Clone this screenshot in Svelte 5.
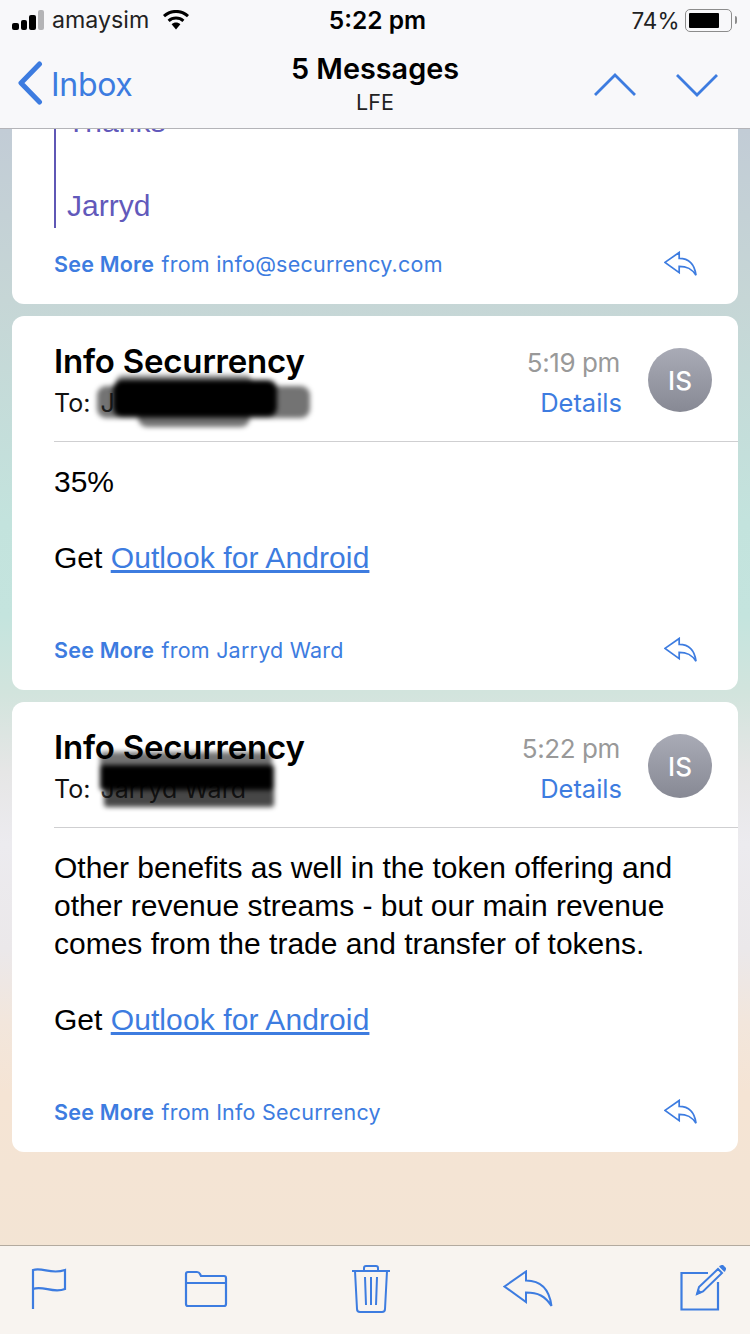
<script>
	const messages = [
		{
			id: 2,
			time: '5:19 pm',
			from: 'Jarryd Ward',
			paragraphs: ['35%']
		},
		{
			id: 3,
			time: '5:22 pm',
			from: 'Info Securrency',
			paragraphs: [
				'Other benefits as well in the token offering and other revenue streams - but our main revenue comes from the trade and transfer of tokens.'
			]
		}
	];
</script>

{#snippet replyIcon(cls)}
	<svg class={cls} viewBox="0 0 50 38" aria-hidden="true">
		<path
			d="M1.5 16.5 L23 1.5 V10.5 C36 10.5 46 17 48.5 36 C42 26 35 22.5 23 22.5 V32 Z"
			fill="none"
			stroke="#3d7ce0"
			stroke-width="2.6"
			stroke-linejoin="miter"
		/>
	</svg>
{/snippet}

<div class="page">
	<header class="nav">
		<div class="status">
			<div class="carrier">
				<span class="bars"><i></i><i></i><i></i><i class="off"></i></span>
				<span>amaysim</span>
				<svg class="wifi" viewBox="0 0 28 20" aria-hidden="true">
					<path d="M14 19.5 L9.6 14.2 C12 12 16 12 18.4 14.2 Z" fill="#000" />
					<path d="M6.6 10.8 C10.8 7 17.2 7 21.4 10.8" fill="none" stroke="#000" stroke-width="3" />
					<path d="M2 6.2 C9 -0.2 19 -0.2 26 6.2" fill="none" stroke="#000" stroke-width="3" />
				</svg>
			</div>
			<div class="clock">5:22 pm</div>
			<div class="power">
				<span>74%</span>
				<span class="battery"><b></b></span>
				<span class="nub"></span>
			</div>
		</div>
		<div class="bar">
			<div class="back">
				<svg viewBox="0 0 26 44" aria-hidden="true">
					<path d="M22.5 3 L4 22 L22.5 41" fill="none" stroke="#3d7ce0" stroke-width="5" stroke-linecap="round" stroke-linejoin="round" />
				</svg>
				<span>Inbox</span>
			</div>
			<div class="title">
				<strong>5 Messages</strong>
				<span>LFE</span>
			</div>
			<div class="arrows">
				<svg viewBox="0 0 42 24" aria-hidden="true"><path d="M1 22 L21 2 L41 22" fill="none" stroke="#3d7ce0" stroke-width="2.8" /></svg>
				<svg viewBox="0 0 42 24" aria-hidden="true"><path d="M1 2 L21 22 L41 2" fill="none" stroke="#3d7ce0" stroke-width="2.8" /></svg>
			</div>
		</div>
	</header>

	<main class="thread">
		<article class="card first">
			<blockquote>
				<p class="clipped">Thanks</p>
				<p>Jarryd</p>
			</blockquote>
			<footer class="more">
				<span><b>See More</b> from info@securrency.com</span>
				{@render replyIcon('reply')}
			</footer>
		</article>

		{#each messages as m (m.id)}
			<article class="card">
				<div class="head">
					<div class="who">
						<h2>Info Securrency</h2>
						<div class="to">To: <span class="name">{m.id === 3 ? 'Jarryd Ward' : 'J'}</span></div>
						<div class="smear smear-{m.id}"><i></i><i></i><i></i><i></i></div>
					</div>
					<div class="meta">
						<time>{m.time}</time>
						<a href="#details">Details</a>
					</div>
					<div class="avatar">IS</div>
				</div>
				<div class="body">
					{#each m.paragraphs as p}
						<p>{p}</p>
					{/each}
					<p>Get <a href="#outlook">Outlook for Android</a></p>
				</div>
				<footer class="more">
					<span><b>See More</b> from {m.from}</span>
					{@render replyIcon('reply')}
				</footer>
			</article>
		{/each}
	</main>

	<nav class="tools">
		<svg class="flag" viewBox="0 0 36 42" aria-hidden="true">
			<path d="M2 41 V2 C12 -1 20 7 34 2 V21 C22 26 12 17 2 21" fill="none" stroke="#3d7ce0" stroke-width="2.2" />
		</svg>
		<svg class="folder" viewBox="0 0 44 38" aria-hidden="true">
			<path d="M2 13 H42 M2 34 V4 Q2 2 4 2 H13 Q15 2 16 4 L17 6 H40 Q42 6 42 8 V34 Q42 36 40 36 H4 Q2 36 2 34 Z" fill="none" stroke="#3d7ce0" stroke-width="2.2" />
		</svg>
		<svg class="trash" viewBox="0 0 40 50" aria-hidden="true">
			<path d="M1 7 H39 M13 7 V4 Q13 2 15 2 H25 Q27 2 27 4 V7 M4 7 L6 45 Q6 48 9 48 H31 Q34 48 34 45 L36 7 M14 13 L15 41 M20 13 V41 M26 13 L25 41" fill="none" stroke="#3d7ce0" stroke-width="2" />
		</svg>
		<svg class="tool-reply" viewBox="0 0 50 38" aria-hidden="true">
			<path d="M1.5 16.5 L23 1.5 V10.5 C36 10.5 46 17 48.5 36 C42 26 35 22.5 23 22.5 V32 Z" fill="none" stroke="#3d7ce0" stroke-width="2" />
		</svg>
		<svg class="compose" viewBox="0 0 46 46" aria-hidden="true">
			<path d="M38 17 V44.5 H1.5 V8 H28" fill="none" stroke="#3d7ce0" stroke-width="2.2" />
			<path d="M17 29 L19 22 L38 4 L42 8 L23 26.5 Z" fill="none" stroke="#3d7ce0" stroke-width="2" />
			<path d="M16 30 L18 24 L22 27.5 Z" fill="#3d7ce0" />
			<path d="M40 1.5 L42.5 0.5 L45.5 3.5 L44.5 6 Z" fill="#3d7ce0" stroke="#3d7ce0" stroke-width="1.5" stroke-linejoin="round" />
		</svg>
	</nav>
</div>

<style>
	:global(body) {
		margin: 0;
	}

	.page {
		display: flex;
		flex-direction: column;
		width: 750px;
		height: 1334px;
		overflow: hidden;
		font-family: Inter, 'Liberation Sans', sans-serif;
		color: #000;
		background: linear-gradient(
			180deg,
			#c2ccd6 129px,
			#c6d6d6 300px,
			#c3e3dd 522px,
			#c4e4de 615px,
			#d2e4dd 693px,
			#e6e6e6 772px,
			#ecebef 843px,
			#ebe8ea 950px,
			#f2e6dc 1022px,
			#f5e4d4 1093px,
			#f2e4d4 1334px
		);
	}

	.nav {
		flex: none;
		height: 128px;
		background: #f8f8fa;
		border-bottom: 1px solid #b4b4b8;
	}

	.status {
		display: grid;
		grid-template-columns: 1fr auto 1fr;
		align-items: center;
		height: 40px;
		padding: 0 13px 0 12px;
		font-size: 22.5px;
	}

	.carrier {
		display: flex;
		align-items: center;
		gap: 8px;
		font-size: 23.2px;
		color: #222;
	}

	.bars {
		display: flex;
		align-items: flex-end;
		gap: 2px;
		height: 20px;
	}

	.bars i {
		display: block;
		width: 6.5px;
		border-radius: 2px;
		background: #000;
	}

	.bars i:nth-child(1) {
		height: 7px;
	}
	.bars i:nth-child(2) {
		height: 10px;
	}
	.bars i:nth-child(3) {
		height: 15px;
	}
	.bars i:nth-child(4) {
		height: 20px;
	}

	.bars .off {
		background: #b4b4b6;
	}

	.wifi {
		width: 28px;
		height: 20px;
		margin-left: 5px;
	}

	.clock {
		margin-left: 6px;
		font-weight: 600;
		font-size: 24.5px;
	}

	.power {
		display: flex;
		align-items: center;
		justify-content: flex-end;
		gap: 5px;
		color: #222;
	}

	.battery {
		display: block;
		box-sizing: border-box;
		width: 47px;
		height: 23px;
		padding: 3px;
		border: 1.5px solid #8c8c8c;
		border-radius: 5px;
	}

	.battery b {
		display: block;
		width: 78%;
		height: 100%;
		background: #000;
		border-radius: 1px;
	}

	.nub {
		width: 2.5px;
		height: 8px;
		margin-left: -2px;
		background: #8c8c8c;
		border-radius: 0 2px 2px 0;
	}

	.bar {
		display: grid;
		grid-template-columns: 1fr auto 1fr;
		height: 88px;
		padding: 0 17px;
	}

	.back {
		display: flex;
		align-items: center;
		gap: 8px;
		height: 88px;
		color: #3d7ce0;
		font-size: 32px;
		letter-spacing: -0.3px;
	}

	.back svg {
		width: 26px;
		height: 44px;
		margin-top: -2px;
	}

	.back span {
		margin-top: 1px;
	}

	.title {
		display: flex;
		flex-direction: column;
		align-items: center;
		padding-top: 10px;
	}

	.title strong {
		font-weight: 600;
		font-size: 28.8px;
		line-height: 37px;
	}

	.title span {
		font-size: 21.5px;
		line-height: 30px;
		color: #222;
	}

	.arrows {
		display: flex;
		align-items: flex-start;
		justify-content: flex-end;
		gap: 40px;
		padding: 33px 15px 0 0;
	}

	.arrows svg {
		width: 42px;
		height: 24px;
	}

	.thread {
		flex: 1;
		min-height: 0;
		display: flex;
		flex-direction: column;
		gap: 12px;
		padding: 0 12px;
		overflow: hidden;
	}

	.card {
		flex: none;
		position: relative;
		background: #fff;
		border-radius: 12px;
		padding-left: 42px;
	}

	.first {
		border-radius: 0 0 12px 12px;
	}

	blockquote {
		margin: 0;
		height: 99px;
		border-left: 2px solid #5f57b5;
		color: #6259bb;
		font: 30px/38px 'Liberation Sans', sans-serif;
		overflow: hidden;
		position: relative;
	}

	blockquote p {
		margin: 0;
		position: absolute;
		left: 11px;
	}

	.clipped {
		top: -26px;
	}

	blockquote p:last-child {
		top: 58px;
	}

	.more {
		display: flex;
		align-items: center;
		justify-content: space-between;
		height: 72px;
		padding: 0 41px 4px 0;
		color: #3d7ce0;
		font-size: 21.5px;
		letter-spacing: 0.22px;
	}

	.more b {
		font-weight: 600;
		margin-right: 1px;
	}

	.reply {
		width: 33px;
		height: 26px;
	}

	.head {
		display: flex;
		position: relative;
		height: 126px;
		border-bottom: 1px solid #cfcfd1;
		box-sizing: border-box;
	}

	.who {
		flex: 1;
		position: relative;
		padding-top: 25px;
	}

	h2 {
		margin: 0;
		font-weight: 600;
		font-size: 33px;
		line-height: 40px;
		letter-spacing: -0.2px;
	}

	.to {
		font-size: 25px;
		line-height: 30px;
		color: #111;
		margin-top: 7px;
	}

	.name {
		color: #444;
		margin-left: 3px;
	}

	.smear {
		position: absolute;
		inset: 0;
		filter: blur(2.5px);
		pointer-events: none;
	}

	.smear i {
		position: absolute;
		display: block;
		background: #000;
		border-radius: 9px;
	}

	/* coordinates are relative to the card's text column */
	.smear-2 i:nth-child(1) {
		left: 59px;
		top: 64px;
		width: 164px;
		height: 37px;
	}
	.smear-2 i:nth-child(2) {
		left: 43px;
		top: 70px;
		width: 213px;
		height: 32px;
		background: rgba(0, 0, 0, 0.55);
	}
	.smear-2 i:nth-child(3) {
		left: 84px;
		top: 92px;
		width: 112px;
		height: 19px;
		background: rgba(0, 0, 0, 0.55);
	}
	.smear-2 i:nth-child(4) {
		left: 62px;
		top: 59px;
		width: 136px;
		height: 14px;
		background: rgba(0, 0, 0, 0.45);
	}

	.smear-3 i:nth-child(1) {
		left: 46px;
		top: 63px;
		width: 174px;
		height: 25px;
		border-radius: 3px;
	}
	.smear-3 i:nth-child(2) {
		left: 46px;
		top: 50px;
		width: 172px;
		height: 16px;
		border-radius: 3px;
		background: rgba(0, 0, 0, 0.55);
	}
	.smear-3 i:nth-child(3) {
		left: 50px;
		top: 86px;
		width: 170px;
		height: 19px;
		border-radius: 3px;
		background: rgba(0, 0, 0, 0.72);
	}
	.smear-3 i:nth-child(4) {
		left: 0;
		width: 0;
	}

	.meta {
		display: flex;
		flex-direction: column;
		align-items: flex-end;
		padding-top: 32px;
		margin-right: 26px;
		gap: 10px;
	}

	time {
		margin-right: 2px;
		color: #999;
		font-size: 26px;
		line-height: 30px;
		letter-spacing: -0.4px;
	}

	.meta a {
		color: #3d7ce0;
		font-size: 25.5px;
		line-height: 30px;
		text-decoration: none;
	}

	.avatar {
		display: flex;
		align-items: center;
		justify-content: center;
		width: 64px;
		height: 64px;
		margin: 32px 26px 0 0;
		border-radius: 50%;
		background: linear-gradient(180deg, #a9abb6, #878994);
		color: #fff;
		font-size: 26px;
		font-weight: 500;
	}

	.body {
		padding: 21px 41px 0 0;
		font: 30px/38px 'Liberation Sans', sans-serif;
	}

	.body p {
		margin: 0 0 38px;
	}

	.body p:last-child {
		margin-bottom: 0;
	}

	.body a {
		color: #3d7ce0;
		letter-spacing: 0.1px;
	}

	.body + .more {
		margin-top: 37px;
	}

	.tools {
		flex: none;
		box-sizing: border-box;
		display: flex;
		align-items: center;
		justify-content: space-between;
		height: 89px;
		padding: 0 24px 2px 31px;
		background: #f8f4f0;
		border-top: 1px solid #b3aa9f;
	}

	.flag {
		width: 36px;
		height: 42px;
	}

	.folder {
		width: 44px;
		height: 38px;
		margin: 0 3px 0 -3px;
	}

	.trash {
		width: 40px;
		height: 50px;
	}

	.tool-reply {
		width: 50px;
		height: 38px;
		margin: 0 7px 0 -7px;
	}

	.compose {
		width: 46px;
		height: 46px;
		margin-bottom: 3px;
	}
</style>
